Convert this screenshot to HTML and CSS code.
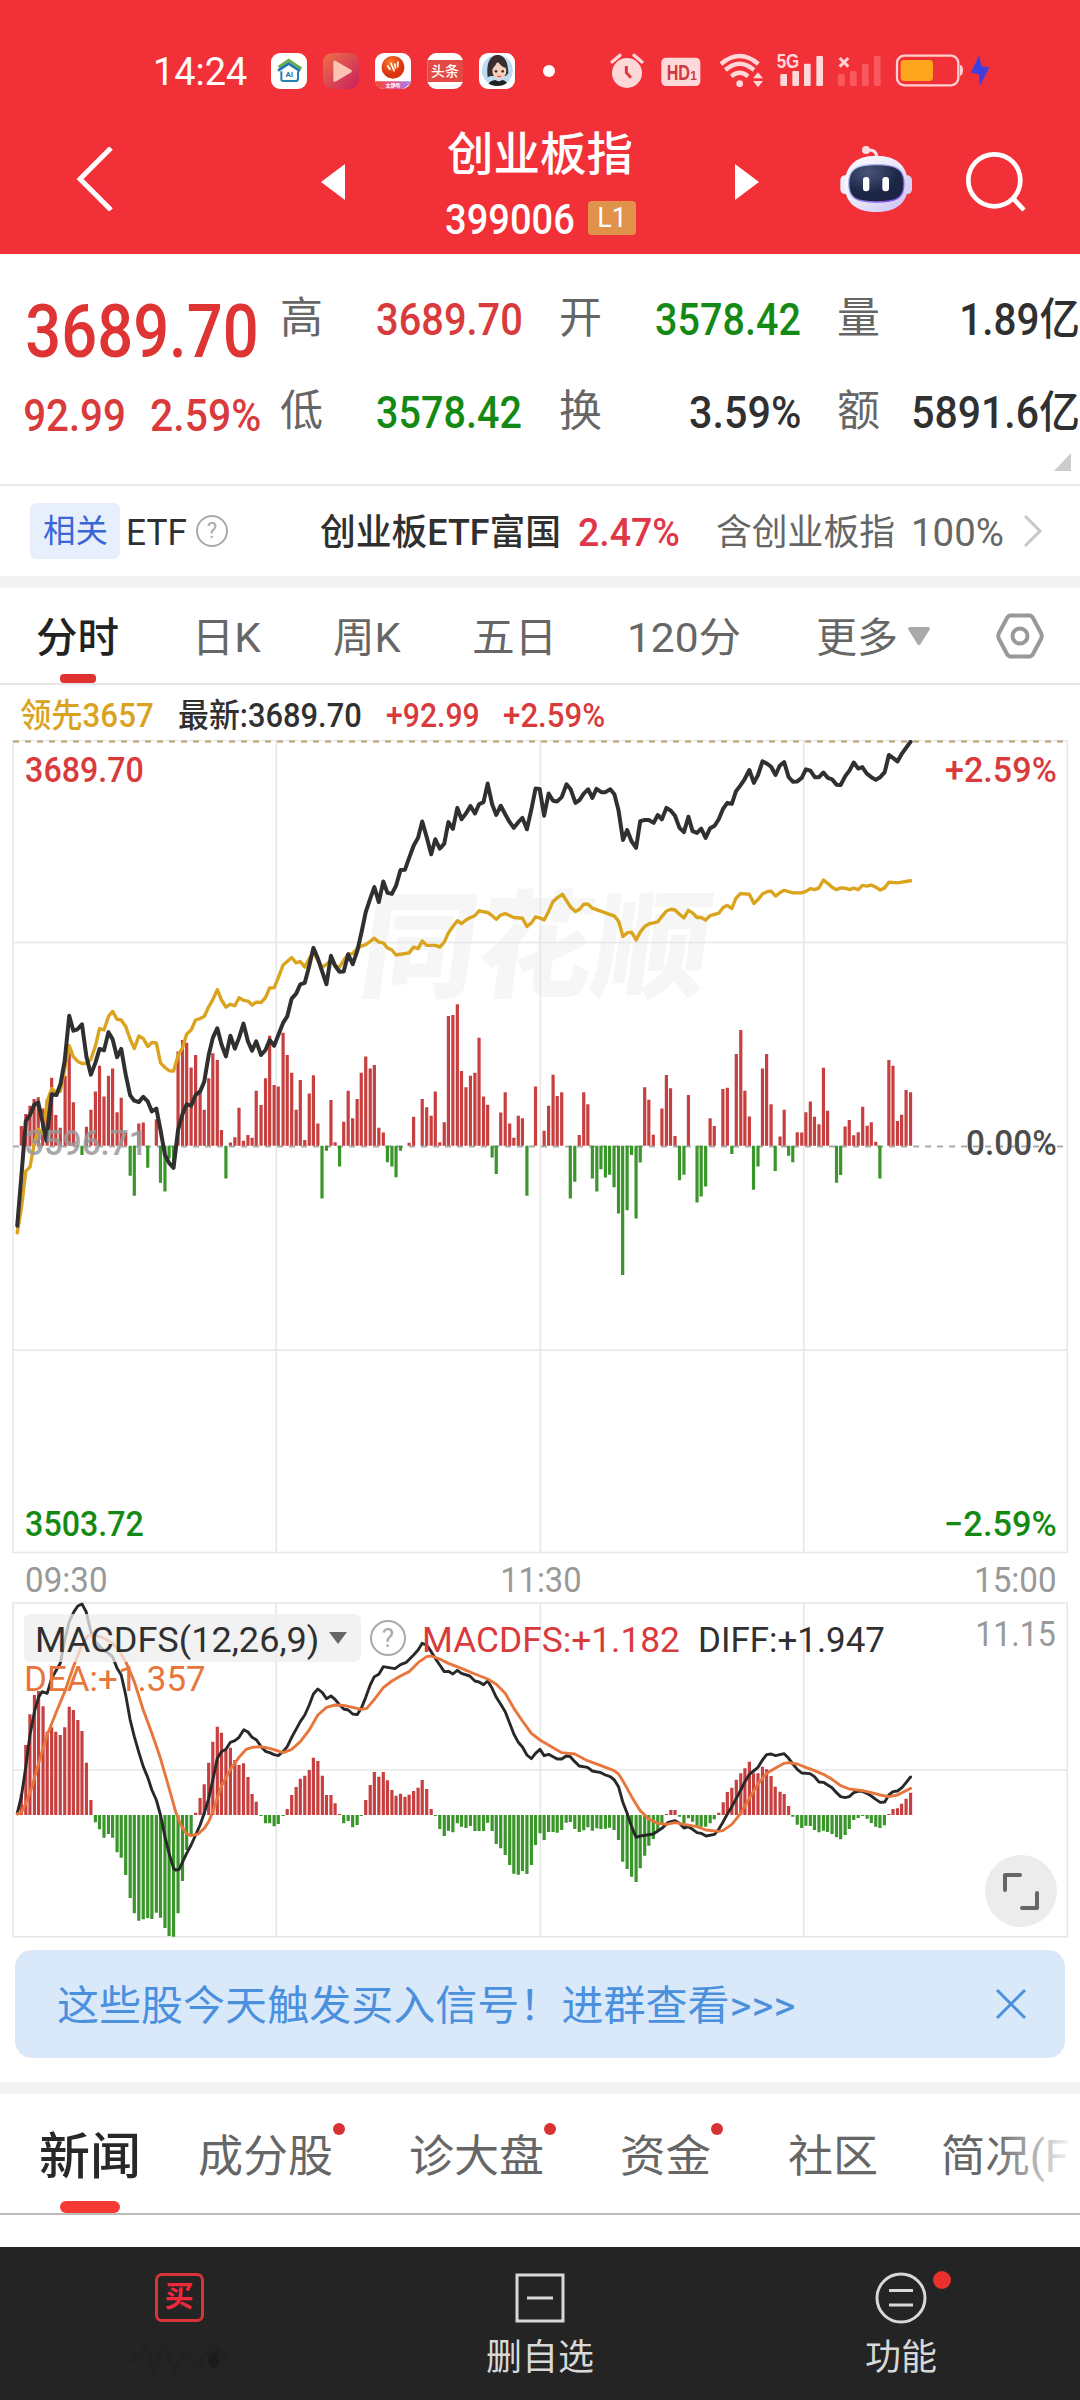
FILE: index.html
```html
<!DOCTYPE html>
<html lang="zh-CN">
<head>
<meta charset="utf-8">
<title>创业板指 399006</title>
<link rel="stylesheet" href="styles.css">
</head>
<body>
<header class="top">
  <div class="status">
    <span class="clock fit" data-w="91">14:24</span>
    <svg class="apps" viewBox="390 0 870 180" width="290" height="60">
      <defs>
        <linearGradient id="play" x1="0" y1="0" x2="1" y2="1"><stop offset="0" stop-color="#f0704a"/><stop offset="1" stop-color="#c8205c"/></linearGradient>
        <linearGradient id="band" x1="0" y1="0" x2="1" y2="0"><stop offset="0" stop-color="#f04a2c"/><stop offset=".55" stop-color="#e0559c"/><stop offset="1" stop-color="#9a8cf0"/></linearGradient>
        <radialGradient id="ball" cx=".4" cy=".3"><stop offset="0" stop-color="#f9802a"/><stop offset="1" stop-color="#dc3410"/></radialGradient>
        <clipPath id="app3"><rect x="705" y="39" width="108" height="108" rx="27"/></clipPath>
        <clipPath id="face"><circle cx="1072" cy="91" r="47"/></clipPath>
      </defs>
      <rect x="393" y="39" width="108" height="108" rx="27" fill="#fff"/>
      <path d="M416 82L446 61L484 86" fill="none" stroke="#67b04a" stroke-width="9"/>
      <path d="M414 92L446 71L480 93" fill="none" stroke="#2274ae" stroke-width="8"/>
      <path d="M424 94V118Q424 123 430 123H466Q474 123 474 116V94" fill="none" stroke="#2480b0" stroke-width="6"/>
      <text x="448" y="111" class="ai">AI</text>
      <rect x="549" y="39" width="108" height="108" rx="27" fill="url(#play)"/>
      <path d="M580 66Q580 60 586 62L634 90Q638 93 634 97L586 125Q580 127 580 121Z" fill="#fbc3b4"/>
      <g clip-path="url(#app3)">
        <rect x="705" y="39" width="108" height="108" fill="#fff"/>
        <circle cx="759" cy="82" r="34" fill="url(#ball)"/>
        <path d="M743 78L750 88M753 70L762 92M765 72L766 84M774 66L773 80" stroke="#fff" stroke-width="5" stroke-linecap="round"/>
        <path d="M705 124H813Q812 134 790 147H705Z" fill="url(#band)"/>
      </g>
      <text x="759" y="140" class="mini">文静听</text>
      <rect x="862" y="39" width="107" height="108" rx="27" fill="#fff"/>
      <rect x="862" y="60" width="107" height="66" fill="#e34a45"/>
      <text x="915" y="108" class="news">头条</text>
      <rect x="1017" y="39" width="108" height="108" rx="27" fill="#fff"/>
      <g clip-path="url(#face)">
        <circle cx="1072" cy="91" r="47" fill="#bcdcf4"/>
        <path d="M1043 112Q1036 52 1070 44Q1104 44 1105 100L1097 108H1052Z" fill="#3a2e30"/>
        <ellipse cx="1078" cy="92" rx="21" ry="25" fill="#f5d0bd"/>
        <path d="M1052 88Q1066 82 1072 62Q1082 80 1099 84L1096 60L1070 50L1052 62Z" fill="#3a2e30"/>
        <circle cx="1068" cy="94" r="4" fill="#432"/><circle cx="1088" cy="94" r="4" fill="#432"/>
        <path d="M1072 108Q1078 112 1084 108" stroke="#c33" stroke-width="3" fill="none"/>
        <path d="M1040 138Q1050 120 1066 120Q1078 128 1086 120Q1100 122 1106 138Z" fill="#222"/>
      </g>
      <circle cx="1227" cy="93" r="18" fill="#fff"/>
    </svg>
    <svg class="system" viewBox="0 0 1260 180" width="420" height="60">
      <g fill="#ffd9da">
        <circle cx="111" cy="99" r="45"/>
        <path d="M66 66L90 46M132 46L156 66" stroke="#ffd9da" stroke-width="10" stroke-linecap="round"/>
        <path d="M109 78V98L123 113" fill="none" stroke="#e2383d" stroke-width="9"/>
        <rect x="214" y="53" width="117" height="85" rx="14"/>
        <circle cx="449" cy="131" r="10"/>
        <path d="M393 72Q449 24 505 72M406 90Q449 53 492 90M424 109Q449 88 474 109" fill="none" stroke="#ffd9da" stroke-width="13"/>
        <path d="M489 115L504 97L519 115ZM489 123L504 142L519 123Z"/>
        <rect x="571" y="102" width="20" height="36" rx="3"/><rect x="607" y="93" width="20" height="45" rx="3"/><rect x="642" y="71" width="20" height="67" rx="3"/><rect x="679" y="48" width="20" height="90" rx="3"/>
      </g>
      <text x="230" y="119" class="hd" textLength="70" lengthAdjust="spacingAndGlyphs">HD</text>
      <text x="301" y="119" class="hd one">1</text>
      <text x="594" y="85" class="g5" textLength="68" lengthAdjust="spacingAndGlyphs">5G</text>
      <path d="M749 54L775 80M775 54L749 80" stroke="#ffd0d0" stroke-width="9"/>
      <g fill="#f9585e"><rect x="744" y="102" width="20" height="36" rx="3"/><rect x="780" y="93" width="20" height="45" rx="3"/><rect x="816" y="71" width="20" height="67" rx="3"/><rect x="852" y="48" width="20" height="90" rx="3"/></g>
      <rect x="921" y="47" width="184" height="89" rx="22" fill="none" stroke="#ffd0d0" stroke-width="7"/>
      <rect x="932" y="60" width="97" height="63" rx="11" fill="#fda51d"/>
      <path d="M1110 75Q1119 76 1119 91T1110 108Z" fill="#ffd0d0"/>
      <path d="M1168 46L1142 98L1166 102L1170 138L1198 82L1174 79Z" fill="#3f3fe0"/>
    </svg>
  </div>
  <div class="titlebar">
    <svg class="back" viewBox="0 0 36 64" width="36" height="64"><path d="M34 1L3 32L34 63" fill="none" stroke="#fff" stroke-width="5"/></svg>
    <svg class="prev" viewBox="0 0 24 36" width="24" height="36"><path d="M24 0V36L0 18Z" fill="#fff"/></svg>
    <div class="name">
      <h1><span class="fit" data-w="184">创业板指</span></h1>
      <p><span class="fit code" data-w="128">399006</span><b>L1</b></p>
    </div>
    <svg class="next" viewBox="0 0 24 36" width="24" height="36"><path d="M0 0V36L24 18Z" fill="#fff"/></svg>
    <svg class="tools" viewBox="0 0 690 330" width="230" height="110">
      <defs>
        <linearGradient id="shell" x1="0" y1="0" x2="1" y2="1"><stop offset="0" stop-color="#fff"/><stop offset=".5" stop-color="#ece8fb"/><stop offset="1" stop-color="#c5bdf2"/></linearGradient>
        <linearGradient id="rim" x1="0" y1="0" x2="1" y2="1"><stop offset="0" stop-color="#b6dcf4"/><stop offset="1" stop-color="#7a3fe0"/></linearGradient>
        <radialGradient id="visor" cx=".35" cy=".2" r=".9"><stop offset="0" stop-color="#4b5578"/><stop offset=".6" stop-color="#1d2748"/><stop offset="1" stop-color="#1b2344"/></radialGradient>
      </defs>
      <path d="M170 78Q168 58 142 60" fill="none" stroke="#fbe6ea" stroke-width="9"/>
      <circle cx="138" cy="60" r="12" fill="#f7dfe4"/>
      <rect x="61" y="136" width="30" height="56" rx="14" fill="#f1ecfb"/><rect x="246" y="136" width="30" height="56" rx="14" fill="#d9d0f6"/>
      <path d="M168 77C235 77 264 112 264 165C264 216 232 246 168 246C106 246 74 216 74 165C74 112 104 77 168 77Z" fill="url(#shell)"/>
      <path d="M168 104C230 104 252 118 252 160C252 204 232 216 168 216C106 216 86 204 86 160C86 118 108 104 168 104Z" fill="url(#visor)" stroke="url(#rim)" stroke-width="4"/>
      <rect x="129" y="141" width="19" height="43" rx="9" fill="#fff"/><rect x="187" y="141" width="20" height="43" rx="9" fill="#fff"/>
      <circle cx="523" cy="151" r="78" fill="none" stroke="#fff" stroke-width="14"/>
      <path d="M580 206L612 240" stroke="#fff" stroke-width="14"/>
    </svg>
  </div>
</header>

<section class="quote">
  <div class="last"><span class="fit big" data-w="229">3689.70</span></div>
  <div class="pair"><i>高</i><span class="fit up" data-w="144">3689.70</span></div>
  <div class="pair"><i>开</i><span class="fit down" data-w="144">3578.42</span></div>
  <div class="pair"><i>量</i><span class="fit" data-w="116">1.89亿</span></div>
  <div class="change"><span class="fit up" data-w="99">92.99</span><span class="fit up" data-w="109">2.59%</span></div>
  <div class="pair"><i>低</i><span class="fit down" data-w="144">3578.42</span></div>
  <div class="pair"><i>换</i><span class="fit" data-w="110">3.59%</span></div>
  <div class="pair"><i>额</i><span class="fit" data-w="165">5891.6亿</span></div>
  <svg class="corner" viewBox="0 0 17 18" width="17" height="18"><path d="M17 0V18H0Z" fill="#ccc"/></svg>
</section>

<section class="etf">
  <span class="tag"><span class="fit" data-w="64">相关</span></span>
  <span class="fit label" data-w="58">ETF</span>
  <span class="help">?</span>
  <span class="fit fund" data-w="238">创业板ETF富国</span>
  <span class="fit gain" data-w="100">2.47%</span>
  <span class="fit note" data-w="177">含创业板指</span>
  <span class="fit note pct" data-w="89">100%</span>
  <svg class="more" viewBox="0 0 20 32" width="20" height="32"><path d="M2 1L17 16L2 31" fill="none" stroke="#c8c8c8" stroke-width="3"/></svg>
</section>

<nav class="periods">
  <span class="tab on"><span class="fit" data-w="81">分时</span></span>
  <span class="tab"><span class="fit" data-w="62">日K</span></span>
  <span class="tab"><span class="fit" data-w="67">周K</span></span>
  <span class="tab"><span class="fit" data-w="77">五日</span></span>
  <span class="tab"><span class="fit" data-w="110">120分</span></span>
  <span class="tab"><span class="fit" data-w="79">更多</span><svg viewBox="0 0 22 18" width="22" height="18"><path d="M1 0H21L22 2L12 18H10L0 2Z" fill="#aaa"/></svg></span>
  <svg class="gear" viewBox="0 0 48 46" width="48" height="46"><path d="M14 2.5H34Q36 3 37 5L45 20Q46.500 23 45 26L37 41Q36 43 34 43.500H14Q12 43 11 41L3 26Q1.500 23 3 20L11 5Q12 3 14 2.500Z" fill="none" stroke="#999" stroke-width="4"/><circle cx="24" cy="23" r="7.500" fill="none" stroke="#999" stroke-width="4"/></svg>
</nav>

<div class="legend">
  <span class="fit lead" data-w="133">领先3657</span>
  <span class="fit" data-w="182">最新:3689.70</span>
  <span class="fit up" data-w="91">+92.99</span>
  <span class="fit up" data-w="100">+2.59%</span>
</div>

<section class="chart price">
  <span class="watermark">同花顺</span>
  <svg id="price" viewBox="0 28 3136 2284.8" width="1080" height="816" preserveAspectRatio="none">
    <path class="grid" d="M38 29H3099V2303H38ZM38 595H3099M38 1737H3099M802 29V2303M1569 29V2303M2334 29V2303"/>
    <path class="limit" d="M38 32H3099"/>
    <path class="zero" d="M38 1166H3099"/>
    <g class="bars"></g>
    <polyline class="avg" points=""/>
    <polyline class="now" points=""/>
  </svg>
  <span class="axis tl up fit" data-w="117">3689.70</span>
  <span class="axis tr up fit" data-w="110">+2.59%</span>
  <span class="axis ml fit" data-w="116">3596.71</span>
  <span class="axis mr fit" data-w="89">0.00%</span>
  <span class="axis bl down fit" data-w="117">3503.72</span>
  <span class="axis br down fit" data-w="110">−2.59%</span>
</section>

<div class="times">
  <span class="fit" data-w="80">09:30</span><span class="fit" data-w="78">11:30</span><span class="fit" data-w="79">15:00</span>
</div>

<section class="chart macd">
  <svg id="macd" viewBox="0 330 3136 1020" width="1080" height="340" preserveAspectRatio="none">
    <path class="grid" d="M38 339H3099V1340H38ZM38 840H3099M802 339V1340M1569 339V1340M2334 339V1340"/>
    <g class="bars"></g>
    <polyline class="diff" points=""/>
    <polyline class="dea" points=""/>
  </svg>
  <div class="readout">
    <span class="pill"><span class="fit" data-w="280">MACDFS(12,26,9)</span><svg viewBox="0 0 18 12" width="18" height="12"><path d="M0 0H18L9 12Z" fill="#666"/></svg></span>
    <span class="help">?</span>
    <span class="fit up" data-w="255">MACDFS:+1.182</span>
    <span class="fit" data-w="184">DIFF:+1.947</span>
    <span class="fit max" data-w="78">11.15</span>
  </div>
  <span class="axis deaval fit" data-w="179">DEA:+1.357</span>
  <svg class="expand" viewBox="0 0 72 72" width="72" height="72"><circle cx="36" cy="36" r="36" fill="#ececec"/><path d="M20 35V20H35M52 38V53H37" fill="none" stroke="#666" stroke-width="4"/></svg>
</section>

<aside class="banner">
  <span class="fit" data-w="736">这些股今天触发买入信号！进群查看&gt;&gt;&gt;</span>
  <svg viewBox="0 0 32 32" width="32" height="32"><path d="M2 2L30 30M30 2L2 30" stroke="#4a90dd" stroke-width="3"/></svg>
</aside>

<nav class="topics">
  <span class="tab on"><span class="fit" data-w="98">新闻</span></span>
  <span class="tab dot"><span class="fit" data-w="133">成分股</span></span>
  <span class="tab dot"><span class="fit" data-w="132">诊大盘</span></span>
  <span class="tab dot"><span class="fit" data-w="88">资金</span></span>
  <span class="tab"><span class="fit" data-w="87">社区</span></span>
  <span class="tab fade"><span class="fit" data-w="126">简况(F</span></span>
</nav>

<footer class="actions">
  <div class="action buy"><span class="seal">买</span>
    <svg class="smudge" viewBox="0 0 110 36" width="110" height="36"><path d="M8 24L22 10L30 30L40 8L50 32L62 14L74 28L88 8L104 22" fill="none" stroke="#212121" stroke-width="5"/><ellipse cx="90" cy="22" rx="6" ry="8" fill="#1c1c1c"/></svg>
  </div>
  <div class="action">
    <svg viewBox="0 0 50 50" width="50" height="50"><path d="M2 2H48V48H2ZM12 25H38" fill="none" stroke="#d8d8d8" stroke-width="3"/></svg>
    <span class="fit" data-w="106">删自选</span>
  </div>
  <div class="action alert">
    <svg viewBox="0 0 52 52" width="52" height="52"><circle cx="26" cy="26" r="24" fill="none" stroke="#d8d8d8" stroke-width="3"/><path d="M14 18.500H38M14 33H38" stroke="#d8d8d8" stroke-width="3"/></svg>
    <span class="fit" data-w="70">功能</span>
  </div>
</footer>
<script src="charts.js"></script>
</body>
</html>
```
FILE: styles.css
```css
* { box-sizing: border-box; }
body {
  margin: 0; width: 1080px; height: 2400px; overflow: hidden;
  display: flex; flex-direction: column;
  background: #fff; color: #303030;
  font-family: Roboto, "Noto Sans CJK SC", sans-serif;
}
svg { display: block; flex: none; }
i, b { font-style: normal; font-weight: 400; }
.fit { display: block; flex: none; white-space: nowrap; transform-origin: 0 50%; translate: 0 1.5px; }
.up { color: #d93a3c; }
.down { color: #148a14; }

.top { height: 254px; background: #f23037; color: #fff; flex: none; }
.status { height: 101px; padding: 40px 0 0 156px; display: flex; align-items: flex-start; }
.clock { font-size: 38px; line-height: 61px; }
.apps { margin-left: 23px; }
.system { margin-left: 30px; }
.ai { font: 700 24px Roboto; fill: #2274ae; text-anchor: middle; }
.mini { font: 700 15px "Noto Sans CJK SC"; fill: #fff; text-anchor: middle; }
.news { font: 500 42px "Noto Sans CJK SC"; fill: #fff; text-anchor: middle; }
.hd { font: 700 66px "Liberation Sans"; fill: #cf3a40; }
.hd.one { font-size: 36px; }
.g5 { font: 700 60px "Liberation Sans"; fill: #ffd9da; text-anchor: middle; }
.titlebar { height: 153px; display: flex; padding-left: 77px; }
.back { margin-top: 46px; }
.prev { margin: 63px 0 0 208px; }
.name { margin-left: 101px; width: 192px; }
.name h1 { margin: 20px 0 0 2px; font-size: 46px; line-height: 62px; font-weight: 500; }
.name p { margin: 15px 0 0; display: flex; align-items: center; height: 40px; }
.code { font-size: 42px; font-weight: 500; line-height: 40px; }
.name b { margin-left: 14px; width: 48px; height: 34px; border-radius: 4px; background: #e0924b; font-size: 27px; line-height: 34px; text-align: center; }
.next { margin: 63px 0 0 97px; }
.tools { margin: 29px 0 0 61px; }

.quote {
  position: relative; height: 232px; flex: none; padding: 26px 0 0 25px; border-bottom: 2px solid #e9e9e9;
  display: grid; grid-template-columns: 256px 240px 240px 240px; column-gap: 0; grid-template-rows: 93px 93px;
  align-content: start; font-size: 44px; font-weight: 500; line-height: 76px;
}
.quote { grid-template-columns: 256px 279px 278px 240px; }
.pair { width: 240px; display: flex; justify-content: space-between; }
.pair i { color: #666; font-size: 43px; line-height: 76px; margin-left: -1px; }
.big { margin: 12px 0 0 2px; font-size: 74px; font-weight: 500; color: #de3434; }
.change { display: flex; gap: 27px; padding-top: 3px; }
.corner { position: absolute; right: 9px; bottom: 13px; }

.etf { height: 102px; flex: none; padding-left: 30px; border-bottom: 12px solid #f3f3f3; display: flex; align-items: center; font-size: 36px; line-height: 56px; }
.tag { width: 90px; height: 56px; padding-left: 13px; border-radius: 6px; background: #e8effc; color: #3a66d8; font-size: 32px; line-height: 53px; }
.label { margin-left: 8px; }
.help { border: 2px solid #aaa; color: #aaa; border-radius: 50%; text-align: center; }
.etf .help { margin-left: 10px; width: 32px; height: 32px; font-size: 22px; line-height: 28px; }
.fund { margin-left: 92px; font-weight: 500; }
.gain { margin-left: 21px; color: #e0364a; font-weight: 500; font-size: 38px; }
.note { margin-left: 38px; color: #666; }
.pct { margin-left: 20px; font-size: 38px; }
.more { margin-left: 20px; }

.periods { height: 97px; flex: none; border-bottom: 2px solid #e6e6e6; display: flex; padding-left: 37px; font-size: 41px; line-height: 94px; color: #666; }
.tab { position: relative; display: flex; align-items: center; }
.periods .on { color: #222; font-weight: 500; }
.periods .tab:nth-child(2) { margin-left: 81px; }
.periods .tab:nth-child(3) { margin-left: 73px; }
.periods .tab:nth-child(4) { margin-left: 73px; }
.periods .tab:nth-child(5) { margin-left: 79px; }
.periods .tab:nth-child(6) { margin-left: 77px; }
.periods .tab svg { margin-left: 12px; }
.on::after { content: ""; position: absolute; bottom: 0; left: 23px; width: 36px; height: 9px; border-radius: 4px; background: #e03030; }
.gear { margin: 25px 0 0 66px; }

.legend { height: 55px; flex: none; display: flex; padding-left: 20px; gap: 26px; font-size: 33px; line-height: 58px; font-weight: 500; }
.lead { color: #d9a31f; }

.chart { position: relative; flex: none; isolation: isolate; }
.price { height: 813px; }
.times { height: 47px; flex: none; padding: 0 25px 0 26px; display: flex; justify-content: space-between; color: #999; font-size: 35px; line-height: 52px; }
.macd { height: 340px; }
.chart svg path, .chart svg polyline { vector-effect: non-scaling-stroke; fill: none; stroke-linejoin: round; stroke-linecap: round; }
.chart svg .grid { stroke: #e6e6e6; stroke-width: 1.5; }
.chart svg .limit { stroke: #b8a26c; stroke-width: 2; stroke-dasharray: 6 6; stroke-linecap: butt; }
.chart svg .zero { stroke: #aaa; stroke-width: 2; stroke-dasharray: 6 6; stroke-linecap: butt; }
.chart svg .rise { stroke: #c83f3f; stroke-width: 3.2; stroke-linecap: butt; }
.chart svg .fall { stroke: #3a962a; stroke-width: 3.2; stroke-linecap: butt; }
.now { stroke: #303030; stroke-width: 4; }
.avg { stroke: #dba41f; stroke-width: 3.4; }
.diff { stroke: #282828; stroke-width: 2.9; }
.dea { stroke: #e8763c; stroke-width: 2.9; }
.chart .pill svg path { fill: #666; }
.watermark { position: absolute; z-index: -1; left: 362px; top: 128px; font-size: 116px; line-height: 160px; font-weight: 900; color: #f6f6f6; transform: skewX(-8deg); }
.axis { position: absolute; font-size: 35px; line-height: 40px; font-weight: 500; }
.tl { left: 26px; top: 9px; }
.tr { left: 946px; top: 9px; }
.ml { left: 26px; top: 382px; color: #999; opacity: .85; }
.mr { left: 967px; top: 382px; color: #4c4c4c; }
.bl { left: 26px; top: 763px; }
.br { left: 946px; top: 763px; }
.readout { position: absolute; left: 24px; top: 14px; display: flex; align-items: center; font-size: 35.5px; line-height: 48px; }
.pill { display: flex; align-items: center; width: 337px; height: 48px; padding-left: 13px; gap: 12px; border-radius: 6px; background: rgba(238, 238, 238, .75); }
.readout .help { margin: 0 18px 0 9px; width: 36px; height: 36px; font-size: 26px; line-height: 32px; }
.readout .fit + .fit { margin-left: 21px; }
.readout .max { position: relative; top: -6px; color: #999; }
.readout .fit + .max { margin-left: 93px; }
.deaval { left: 26px; top: 58px; color: #e8763c; font-weight: 400; }
.expand { position: absolute; left: 985px; top: 255px; }

.banner { height: 108px; flex: none; margin: 10px 15px 24px; padding: 0 38px 0 43px; border-radius: 17px; background: #dae9fa; color: #4a90dd; display: flex; justify-content: space-between; align-items: center; font-size: 41px; line-height: 102px; }

.topics { height: 133px; flex: none; border-top: 12px solid #f3f3f3; border-bottom: 2px solid #bbb; padding-left: 40px; display: flex; font-size: 44px; line-height: 119px; color: #666; }
.topics .fit { translate: 0 4px; }
.topics .on { color: #282828; font-size: 50px; font-weight: 500; }
.topics .on::after { left: 20px; width: 60px; height: 12px; border-radius: 6px; background: #f53a33; }
.topics .tab:nth-child(2) { margin-left: 61px; }
.topics .tab:nth-child(3) { margin-left: 79px; }
.topics .tab:nth-child(4) { margin-left: 79px; }
.topics .tab:nth-child(5) { margin-left: 79px; }
.topics .tab:nth-child(6) { margin-left: 67px; }
.dot::after { content: ""; position: absolute; right: -13px; top: 29px; width: 12px; height: 12px; border-radius: 50%; background: #d93232; }
.fade::after { content: ""; position: absolute; inset: 0 -11px 0 50px; background: linear-gradient(90deg, rgba(255,255,255,0), #fff 95%); }

.actions { height: 153px; flex: none; margin-top: 32px; background: #242424; color: #d8d8d8; display: grid; grid-template-columns: 358px 363px 359px; font-size: 36px; line-height: 54px; }
.action { position: relative; display: flex; flex-direction: column; align-items: center; padding-top: 26px; }
.action .fit { margin-top: 6px; }
.seal { width: 49px; height: 49px; border: 3px solid #d93438; border-radius: 7px; color: #f0283c; font-size: 29px; line-height: 42px; text-align: center; font-weight: 700; }
.smudge { margin-top: 16px; }
.alert { padding-top: 25px; }
.alert .fit { margin-top: 5px; }
.alert::after { content: ""; position: absolute; left: 212px; top: 24px; width: 18px; height: 18px; border-radius: 50%; background: #e8302c; }
```
FILE: charts.js
```js
// Intraday series; each pair is "x,y" in the chart's own viewBox units.
const flow = `62,1109 75,1075 87,1052 99,1033 111,1028 124,1060 137,1035 150,974 162,1078 175,1114 189,968 201,905 213,1042 238,1190 251,1111 264,1063 277,1012 289,940 302,1026 315,968 327,948 340,1070 352,1030 365,1126 378,1248 390,1304 403,1102 416,1099 429,1226 454,1090 466,1268 479,1292 491,1200 504,1215
517,900 530,868 542,876 555,945 568,910 581,1010 593,1063 606,975 618,905 631,924 643,1120 656,1256 669,1155 682,1140 694,1058 707,1150 720,1134 732,1142 744,1010 758,1050 771,975 783,856 796,994 808,998 822,848 834,910 847,960 860,1063 872,980 885,1148 898,1018 910,967 923,1102 935,1312 948,1178 961,1036 973,1154 986,1222 998,1097 1011,1010 1024,1087 1037,1033 1049,960 1062,914 1075,948 1087,938 1100,1114 1113,1127 1125,1210 1138,1222 1150,1252 1163,1178 1188,1156 1201,1083 1226,1033 1239,1056 1252,1080 1264,1012 1277,1154 1290,1098 1302,801 1315,798 1328,768 1340,955 1353,1000 1366,968 1379,960 1391,862 1404,1026 1416,1049 1429,1197 1441,1243 1454,1071 1467,1014 1480,1102 1492,1142 1505,1080 1517,1087 1530,1304 1555,998
1580,1122 1593,1052 1606,965 1618,1025 1631,1014 1656,1312 1669,1265 1682,1134 1695,1014 1707,1048 1720,1256 1733,1292 1745,1230 1758,1253 1770,1245 1783,1280 1796,1354 1808,1526 1821,1345 1834,1190 1847,1368 1859,1211 1872,1000 1884,1035 1897,1133 1922,1060 1935,966 1947,1003 1960,1137 1973,1261 1986,1245 1999,1022 2024,1323 2036,1306 2049,1278 2062,1087 2074,1109 2099,1005 2112,1002 2125,1187 2138,907 2151,840 2163,1010 2176,1082 2188,1287 2201,1222 2214,948 2226,907 2239,1048 2251,1235 2265,1138 2277,1063 2290,1192 2302,1210 2315,1126 2328,1127 2340,1070 2353,1040 2365,1083 2378,1104 2391,946 2403,1066 2429,1268 2441,1246 2454,1110 2466,1092 2479,1135 2492,1126 2505,1055 2518,1108 2530,1098 2543,1153 2555,1256 2581,924 2593,940 2606,1095 2618,1077 2631,1008 2644,1014`;

const now = `50,1388 62,1250 75,1095 87,1078 99,1050 111,1043 124,1100 135,1150 150,1020 164,1022 176,990 188,925 201,800 213,842 225,838 238,824 251,915 264,965 277,932 289,893 302,897 315,846 327,866 340,916 352,893 365,965 378,1023 390,1038 403,1042 416,1027 429,1040 441,1068 454,1060 466,1120 479,1190 491,1212 504,1226 517,1120 530,1075 542,1048 555,1052 568,1022 581,1012 593,985 606,910 618,862 631,835 643,880 656,914 669,856 682,892 694,862 707,822 720,872 732,898 744,872 758,910 771,896 783,868 796,884 808,855 822,820 834,802 847,752 860,738 872,712 885,708 898,660 910,610 923,640 948,712 961,632 973,660 986,677 998,676 1011,628 1024,656 1037,620 1049,570 1062,510 1075,472 1087,440 1100,482 1113,424 1125,456 1138,459 1150,436 1163,392 1176,391 1188,358 1201,324 1214,302 1226,256 1239,300 1252,348 1264,306 1277,332 1290,318 1302,258 1315,277 1328,218 1340,250 1353,234 1366,213 1379,234 1391,208 1404,202 1416,150 1429,208 1441,238 1454,212 1467,236 1480,258 1492,274 1505,258 1517,246 1530,278 1543,222 1555,164 1567,165
1580,240 1593,178 1606,198 1618,200 1631,188 1645,152 1657,166 1671,204 1683,196 1695,178 1708,166 1720,190 1732,165 1746,174 1758,174 1772,166 1784,180 1796,225 1809,308 1821,280 1834,312 1847,330 1859,255 1872,252 1884,252 1898,260 1910,238 1922,250 1935,218 1948,226 1960,240 1973,274 1986,286 1999,243 2011,283 2024,288 2036,276 2049,302 2062,275 2075,268 2087,250 2100,220 2112,204 2125,207 2137,172 2150,155 2162,138 2176,112 2189,148 2201,126 2214,88 2227,94 2239,103 2252,126 2264,100 2277,90 2290,132 2303,145 2315,144 2328,134 2340,110 2353,114 2366,132 2378,132 2391,119 2404,134 2416,138 2429,153 2441,154 2454,130 2467,113 2479,91 2492,108 2504,104 2517,122 2530,132 2543,139 2556,132 2569,118 2581,70 2593,78 2606,88 2619,66 2631,50 2644,33`;

const avg = `50,1408 62,1340 75,1235 87,1224 99,1160 111,1118 124,1130 137,1040 150,1004 162,1014 175,1012 188,950 201,884 213,915 226,928 238,934 251,934 264,922 277,885 289,836 302,840 315,802 327,788 340,810 352,812 365,830 378,866 390,892 403,857 416,864 429,886 441,875 454,876 466,932 479,945 491,954 504,955 517,912 530,890 542,852 555,840 568,812 581,808 593,802 606,775 618,755 631,727 643,756 656,776 669,768 682,772 694,750 707,757 720,759 732,770 744,762 758,763 771,749 783,722 796,722 808,694 822,658 834,648 847,637 860,652 872,648 885,664 898,640 910,622 923,645 936,664 948,656 961,645 973,660 986,664 998,645 1011,628 1024,626 1037,612 1049,605 1062,601 1075,592 1087,583 1100,594 1113,596 1125,610 1138,616 1150,630 1163,628 1188,624 1201,608 1214,612 1226,591 1239,603 1264,603 1277,608 1290,594 1302,568 1315,550 1328,534 1340,542 1353,532 1366,525 1379,520 1391,506 1404,509 1416,511 1429,520 1441,530 1454,518 1467,514 1492,525 1517,527 1530,550 1543,540 1555,523 1567,526
1580,532 1593,508 1606,480 1618,470 1633,460 1645,478 1657,496 1671,508 1683,502 1695,488 1708,488 1720,499 1746,508 1784,521 1796,535 1809,578 1821,568 1834,566 1847,588 1859,566 1872,550 1884,543 1910,537 1922,522 1935,507 1948,502 1960,504 1973,516 1986,526 1999,505 2011,512 2024,525 2036,525 2049,532 2062,520 2087,513 2100,497 2112,491 2125,500 2137,471 2150,458 2176,460 2189,486 2201,475 2214,459 2227,453 2239,451 2252,465 2264,456 2277,449 2303,456 2328,456 2340,452 2353,444 2366,447 2378,442 2391,420 2404,430 2416,440 2429,447 2441,442 2454,443 2467,447 2479,443 2492,447 2504,435 2517,437 2530,434 2543,440 2556,448 2569,442 2581,426 2606,428 2619,426 2644,422`;

const hist = `62,912 75,765 87,673 100,615 112,603 125,649 137,725 150,712 162,725 175,735 188,712 201,650 213,660 226,690 238,723 251,818 264,930 277,997 289,1018 302,1043 315,1032 327,1043 340,1087 352,1103 365,1155 378,1224 390,1270 403,1292 416,1288 429,1284 441,1287 454,1268 466,1283 479,1314 491,1338 504,1340 517,1270 530,1173 542,1080 555,1035 568,968 581,924 593,883 606,818 618,755 631,710 643,728 656,780 669,773 682,810 694,825 707,820 720,861 732,912 744,935 758,978 771,1000 783,1000 796,1009 808,1002 822,978 834,957 847,915 860,891 872,866 885,857 898,840 910,803 923,813 936,857 948,915 961,915 973,940 986,972 998,1000 1011,993 1024,1012 1037,1005 1049,978 1062,930 1075,885 1087,846 1100,860 1113,846 1125,871 1138,900 1150,917 1163,911 1176,920 1188,914 1201,903 1214,893 1226,870 1239,897 1252,957 1264,978 1277,1017 1290,1038 1302,1022 1315,1027 1328,1000 1340,1010 1353,1014 1366,1008 1379,1023 1391,1023 1404,1023 1416,998 1429,1023 1441,1062 1454,1075 1467,1095 1480,1125 1492,1151 1505,1154 1517,1143 1530,1152 1543,1125 1555,1065 1568,1030
1580,1050 1593,1026 1606,1026 1618,1028 1631,1020 1644,998 1656,996 1669,1017 1682,1026 1695,1021 1707,1012 1720,1022 1733,1015 1745,1017 1758,1016 1770,1013 1783,1020 1796,1050 1808,1115 1821,1137 1834,1160 1847,1176 1859,1135 1872,1097 1884,1067 1897,1047 1910,1020 1922,1005 1935,972 1948,960 1960,960 1973,980 1986,1000 1999,985 2011,995 2024,1010 2036,1010 2049,1010 2062,1000 2074,988 2087,968 2100,937 2112,906 2125,893 2138,869 2151,850 2163,835 2176,815 2188,850 2201,850 2214,830 2226,838 2239,858 2251,890 2265,905 2277,912 2290,948 2302,980 2315,1004 2328,1014 2340,1007 2353,1008 2365,1020 2378,1027 2391,1022 2403,1026 2416,1032 2429,1042 2441,1048 2454,1035 2466,1017 2479,990 2492,984 2505,978 2518,986 2530,999 2543,1010 2555,1014 2568,1006 2581,972 2593,957 2606,955 2618,941 2631,926 2644,908`;

const diff = `50,970 62,920 75,830 87,735 100,665 112,622 122,605 137,610 150,565 175,520 188,450 201,395 215,365 226,348 238,342 250,365 264,425 277,455 300,480 315,490 327,500 340,535 352,555 365,615 378,690 390,740 404,790 416,830 429,862 441,900 454,930 466,975 479,1040 491,1090 504,1135 510,1140 520,1138 542,1090 555,1065 568,1035 581,1005 593,970 606,925 618,870 631,805 643,785 656,778 669,757 682,752 694,742 708,719 720,726 732,742 745,750 758,770 771,784 783,788 796,794 808,797 822,785 834,770 847,742 872,695 885,675 898,645 910,612 923,597 936,608 948,626 961,618 973,628 986,645 998,657 1011,660 1024,672 1037,674 1049,655 1062,622 1075,585 1087,560 1100,553 1113,530 1125,532 1147,536 1163,524 1180,517 1201,495 1214,480 1226,460 1239,465 1252,485 1264,505 1277,525 1290,545 1302,544 1315,552 1328,541 1340,550 1364,558 1379,573 1391,576 1404,584 1416,573 1429,595 1441,622 1454,643 1467,665 1480,700 1492,732 1505,757 1517,771 1530,795 1543,806 1555,790 1568,778
1580,797 1593,793 1606,800 1618,807 1631,807 1644,798 1656,800 1669,815 1682,828 1706,832 1720,843 1745,848 1758,855 1772,860 1784,870 1796,890 1808,935 1821,970 1834,1010 1847,1042 1859,1038 1897,1032 1922,1015 1940,997 1960,992 1973,1000 1986,1014 1999,1010 2011,1018 2024,1028 2036,1030 2050,1038 2075,1033 2087,1018 2100,995 2112,972 2125,950 2138,925 2151,900 2163,875 2176,853 2188,843 2201,832 2214,810 2226,794 2239,792 2252,797 2277,791 2290,805 2303,823 2315,838 2328,849 2352,851 2365,860 2378,876 2391,877 2416,893 2429,908 2441,920 2454,923 2466,920 2479,908 2492,904 2504,904 2517,910 2530,918 2543,928 2556,937 2569,936 2581,915 2593,905 2606,903 2619,893 2631,878 2644,861`;

const dea = `50,972 62,968 75,940 90,900 112,820 137,735 162,670 188,605 213,530 238,465 255,437 277,436 300,443 327,460 345,480 365,515 390,575 416,660 441,730 466,805 491,895 510,965 525,1005 542,1032 555,1037 575,1032 593,1015 606,995 618,965 631,925 643,888 669,838 694,802 715,778 732,772 758,770 783,775 808,783 822,788 847,778 872,755 898,720 923,675 948,652 973,645 998,646 1024,652 1049,658 1065,655 1087,628 1113,593 1138,573 1163,558 1188,545 1214,518 1239,500 1252,498 1277,507 1302,520 1340,535 1379,552 1416,567 1441,583 1467,610 1492,655 1517,693 1543,730 1568,750
1606,773 1631,788 1669,792 1706,812 1745,827 1783,842 1796,852 1810,875 1834,920 1859,962 1884,987 1910,1000 1935,1003 1960,998 1986,1003 2024,1010 2050,1020 2087,1024 2100,1021 2125,1003 2151,970 2176,925 2201,882 2226,850 2252,834 2277,820 2290,818 2315,822 2340,832 2365,842 2391,853 2416,868 2441,887 2466,897 2504,902 2530,908 2556,915 2581,920 2606,915 2619,908 2644,895`;

function drawBars(svg, data, zero) {
  const d = { rise: '', fall: '' };
  for (const pair of data.split(/\s+/)) {
    const [x, y] = pair.split(',').map(Number);
    d[y < zero ? 'rise' : 'fall'] += `M${x} ${zero}V${y}`;
  }
  const g = svg.querySelector('.bars');
  for (const name in d) {
    const path = document.createElementNS('http://www.w3.org/2000/svg', 'path');
    path.setAttribute('class', name);
    path.setAttribute('d', d[name]);
    g.append(path);
  }
}

const priceSvg = document.getElementById('price');
const macdSvg = document.getElementById('macd');
drawBars(priceSvg, flow, 1164);
drawBars(macdSvg, hist, 975);
priceSvg.querySelector('.now').setAttribute('points', now);
priceSvg.querySelector('.avg').setAttribute('points', avg);
macdSvg.querySelector('.diff').setAttribute('points', diff);
macdSvg.querySelector('.dea').setAttribute('points', dea);

// Condense each label so its glyphs span exactly data-w pixels.
const ctx = document.createElement('canvas').getContext('2d');
for (const el of document.querySelectorAll('.fit')) {
  const s = getComputedStyle(el);
  ctx.font = `${s.fontWeight} ${s.fontSize} ${s.fontFamily}`;
  const m = ctx.measureText(el.textContent);
  const w = Number(el.dataset.w);
  const k = w / (m.actualBoundingBoxRight + m.actualBoundingBoxLeft);
  el.style.width = w + 'px';
  el.style.transform = `translateX(${m.actualBoundingBoxLeft * k}px) scaleX(${k})`;
}
```
